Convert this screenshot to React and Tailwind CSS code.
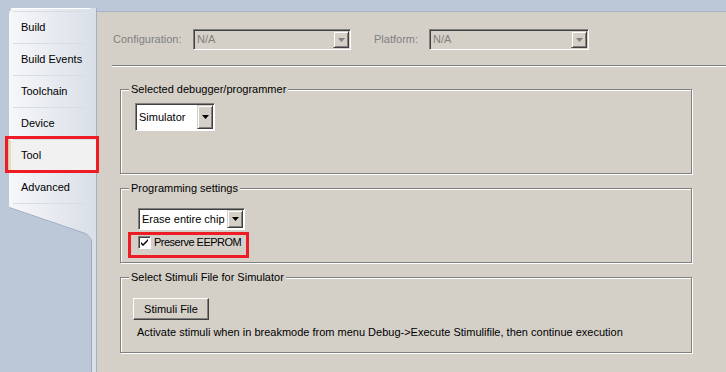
import React from 'react';

const font = { fontFamily: '"Liberation Sans", Arial, sans-serif' };

const Arrow = ({ color = '#000' }) => (
    <svg width="7" height="4" viewBox="0 0 7 4">
        <polygon points="0,0 7,0 3.5,4" fill={color} />
    </svg>
);

const DropButton = ({ disabled }) => (
    <div className="w-[16px] h-full flex items-center justify-center bg-[#d4d0c8] border-t border-l border-t-[#d4d0c8] border-l-[#d4d0c8] border-b border-r border-b-[#404040] border-r-[#404040] shadow-[inset_1px_1px_0_white,inset_-1px_-1px_0_#808080]">
        <Arrow color={disabled ? '#808080' : '#000'} />
    </div>
);

const Combo = ({ value, width, height = 21, disabled }) => (
    <div
        className={`flex items-stretch border-t border-l border-[#808080] border-b border-r border-b-white border-r-white shadow-[inset_1px_1px_0_#404040] p-[1px] ${disabled ? 'bg-[#d4d0c8] text-[#808080]' : 'bg-white text-black'}`}
        style={{ width, height }}
    >
        <div className="flex-1 flex items-center pl-[2px] text-[11px] leading-none">{value}</div>
        <DropButton disabled={disabled} />
    </div>
);

const Group = ({ title, height, children, className = '' }) => (
    <div
        className={`relative ml-[23px] w-[572px] border border-[#808080] shadow-[inset_1px_1px_0_white,1px_1px_0_white] ${className}`}
        style={{ height }}
    >
        <span className="absolute left-[8px] -top-[8px] px-[2px] bg-[#d4d0c8] text-[11px] leading-[14px] text-black">
            {title}
        </span>
        {children}
    </div>
);

const tabs = ['Build', 'Build Events', 'Toolchain', 'Device', 'Tool', 'Advanced'];

export default function App() {
    return (
        <div className="relative flex w-[726px] h-[372px] bg-[#bcc8d8] overflow-hidden" style={font}>
            {/* Side tabs */}
            <div className="w-[97px] shrink-0 pt-[8px] pl-[9px]">
                <div className="relative h-full w-[88px] rounded-tl-[6px] bg-linear-to-r from-[#f6f7f9] to-[#d9dfe8] border-r border-[#a3afc2] [clip-path:polygon(0_0,100%_0,100%_100%,82px_100%,82px_233px,80px_228px,76px_226px,0_200px)]">
                    <div className="h-[1px] ml-[2px] mr-[6px] bg-white"></div>
                    <div className="pt-[2px]">
                        {tabs.map((t) => (
                            <div key={t}>
                                <div className="ml-[4px] w-[72px] h-[1px] bg-[#d8dce3]"></div>
                                <div
                                    className={`h-[31px] flex items-center text-[11px] text-black ${t === 'Tool' ? 'bg-[#f1f1f1] border-l-2 border-[#f5dca0] pl-[10px]' : 'pl-[12px]'}`}
                                >
                                    {t}
                                </div>
                            </div>
                        ))}
                        <div className="ml-[4px] w-[72px] h-[1px] bg-[#d8dce3]"></div>
                    </div>
                    <svg className="absolute left-0 top-0" width="88" height="364">
                        <path d="M0,200 L76,226 Q80,228 82,233 L82,364" fill="none" stroke="#9eabbf" strokeWidth="2" />
                    </svg>
                </div>
            </div>

            {/* Content */}
            <div className="flex-1 mt-[11px] bg-[#d4d0c8] border-t border-[#a9b4c6]">
                <div className="flex items-center mt-[17px] pl-[16px] h-[21px]">
                    <span className="w-[80px] text-[11px] text-[#808080]">Configuration:</span>
                    <Combo value="N/A" width={158} disabled />
                    <span className="ml-[23px] w-[55px] text-[11px] text-[#808080]">Platform:</span>
                    <Combo value="N/A" width={160} disabled />
                </div>
                <div className="mt-[15px] ml-[15px] h-[2px] border-t border-[#808080] border-b border-b-white"></div>

                <Group title="Selected debugger/programmer" height={85} className="mt-[22px]">
                    <div className="pl-[14px] pt-[13px]">
                        <Combo value="Simulator" width={80} height={28} />
                    </div>
                </Group>

                <Group title="Programming settings" height={75} className="mt-[14px]">
                    <div className="pl-[17px] pt-[19px]">
                        <Combo value="Erase entire chip" width={107} height={22} />
                        <div className="flex items-center mt-[6px] h-[13px]">
                            <div className="w-[13px] h-[13px] bg-white border-t border-l border-[#808080] border-b border-r border-b-white border-r-white shadow-[inset_1px_1px_0_#404040] flex items-center justify-center">
                                <svg width="7" height="7" viewBox="0 0 7 7">
                                    <path d="M0,3 L2,5 L7,0 L7,2 L2,7 L0,5 Z" fill="#000" />
                                </svg>
                            </div>
                            <span className="ml-[3px] text-[11px] tracking-[-0.5px] text-black">Preserve EEPROM</span>
                        </div>
                    </div>
                </Group>

                <Group title="Select Stimuli File for Simulator" height={76} className="mt-[14px]">
                    <div className="pl-[12px] pt-[18px]">
                        <button className="w-[76px] h-[22px] bg-[#d4d0c8] border-t border-l border-white border-b border-r border-b-[#404040] border-r-[#404040] shadow-[inset_-1px_-1px_0_#808080] text-[11px] text-black">
                            Stimuli File
                        </button>
                        <div className="mt-[5px] ml-[4px] text-[11px] leading-[14px] text-black">
                            Activate stimuli when in breakmode from menu Debug-&gt;Execute Stimulifile, then continue execution
                        </div>
                    </div>
                </Group>
            </div>

            {/* Highlight boxes */}
            <div className="absolute left-[5px] top-[136px] w-[94px] h-[37px] border-[3px] border-[#ee1c24]"></div>
            <div className="absolute left-[128px] top-[232px] w-[121px] h-[26px] border-[3px] border-[#ee1c24]"></div>
        </div>
    );
}
